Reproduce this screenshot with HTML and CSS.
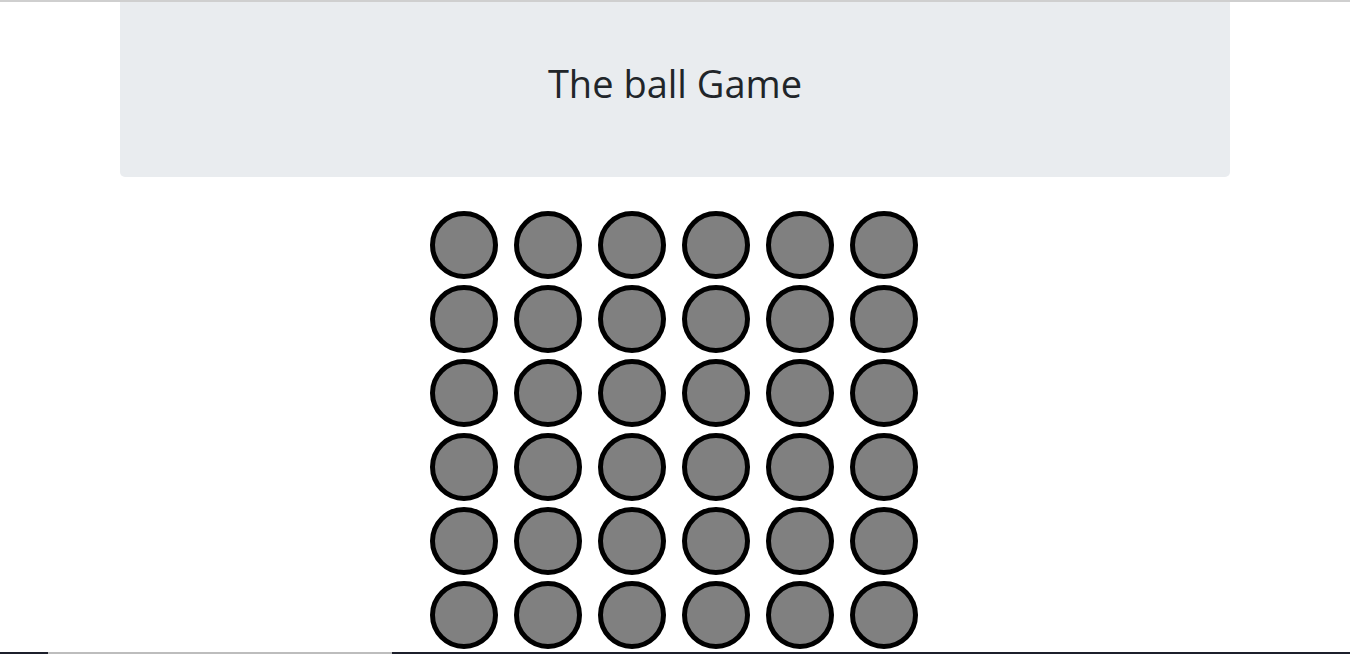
FILE: index.html
```html
<!DOCTYPE html>
<html>
<head>
<meta charset="utf-8">
<link rel="stylesheet" href="styles.css">
</head>
<body>
<div class="topline"></div>
<div class="container">
  <div class="jumbotron">
    <h1 class="title">The ball Game</h1>
  </div>
  <div class="board">
    <div class="ball"></div><div class="ball"></div><div class="ball"></div><div class="ball"></div><div class="ball"></div><div class="ball"></div>
    <div class="ball"></div><div class="ball"></div><div class="ball"></div><div class="ball"></div><div class="ball"></div><div class="ball"></div>
    <div class="ball"></div><div class="ball"></div><div class="ball"></div><div class="ball"></div><div class="ball"></div><div class="ball"></div>
    <div class="ball"></div><div class="ball"></div><div class="ball"></div><div class="ball"></div><div class="ball"></div><div class="ball"></div>
    <div class="ball"></div><div class="ball"></div><div class="ball"></div><div class="ball"></div><div class="ball"></div><div class="ball"></div>
    <div class="ball"></div><div class="ball"></div><div class="ball"></div><div class="ball"></div><div class="ball"></div><div class="ball"></div>
  </div>
</div>
<div class="bottombar"><span class="seg dark1"></span><span class="seg light"></span><span class="seg dark2"></span></div>
</body>
</html>
```
FILE: styles.css
```css
html, body {
  margin: 0;
  padding: 0;
  background: #fff;
  overflow: hidden;
  font-family: "Open Sans", "Noto Sans", sans-serif;
  color: #212529;
}
.topline {
  height: 2px;
  background: #cfcfcf;
}
.container {
  width: 1110px;
  margin: 0 auto;
}
.jumbotron {
  height: 175px;
  background: #e9ecef;
  border-radius: 0 0 5px 5px;
  display: flex;
  align-items: center;
  justify-content: center;
}
.title {
  margin: 0;
  font-weight: 400;
  font-size: 38px;
  line-height: 44px;
  padding-bottom: 14px;
}
.board {
  width: 504px;
  margin: 32px auto 0;
  display: grid;
  grid-template-columns: repeat(6, 84px);
  grid-auto-rows: 74px;
}
.ball {
  width: 58px;
  height: 58px;
  margin: 2px 9px 2px 7px;
  border: 5px solid #000;
  border-radius: 50%;
  background: #808080;
}
.bottombar {
  position: fixed;
  left: 0;
  right: 0;
  bottom: 0;
  height: 2px;
  display: flex;
}
.seg { display: block; height: 2px; }
.dark1 { width: 48px; background: #1c1f2b; }
.light { width: 344px; background: #bdbdbd; }
.dark2 { flex: 1; background: #1c1f2b; }
```
